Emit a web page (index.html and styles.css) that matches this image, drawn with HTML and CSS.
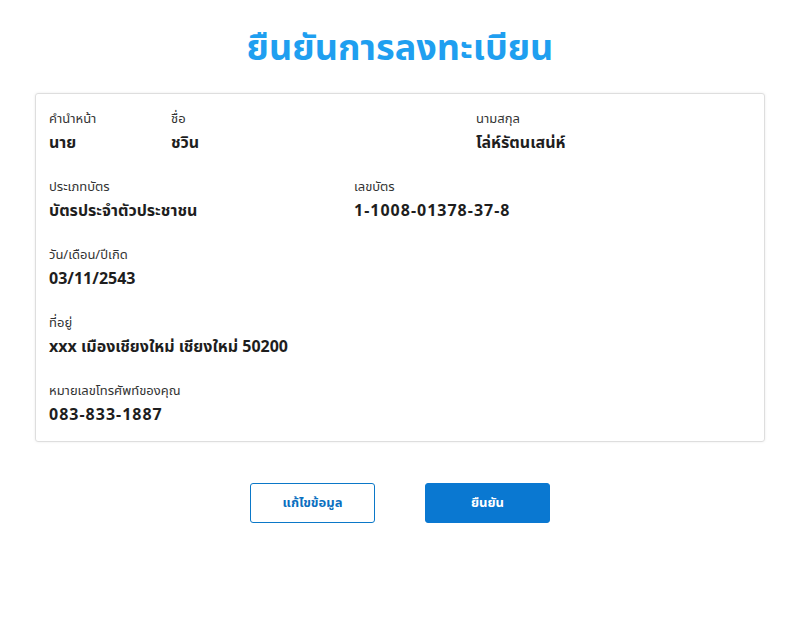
FILE: index.html
```html
<!DOCTYPE html>
<html lang="th">
<head>
<meta charset="utf-8">
<link rel="stylesheet" href="styles.css">
</head>
<body>
<main class="page">
  <h1 class="title">ยืนยันการลงทะเบียน</h1>
  <section class="card">
    <div class="row row-a">
      <div class="field"><div class="label">คำนำหน้า</div><div class="value">นาย</div></div>
      <div class="field"><div class="label">ชื่อ</div><div class="value">ชวิน</div></div>
      <div class="field"><div class="label">นามสกุล</div><div class="value">โล่ห์รัตนเสน่ห์</div></div>
    </div>
    <div class="row row-b">
      <div class="field"><div class="label">ประเภทบัตร</div><div class="value">บัตรประจำตัวประชาชน</div></div>
      <div class="field"><div class="label">เลขบัตร</div><div class="value num">1-1008-01378-37-8</div></div>
    </div>
    <div class="row">
      <div class="field"><div class="label">วัน/เดือน/ปีเกิด</div><div class="value">03/11/2543</div></div>
    </div>
    <div class="row">
      <div class="field"><div class="label">ที่อยู่</div><div class="value">xxx เมืองเชียงใหม่ เชียงใหม่ 50200</div></div>
    </div>
    <div class="row">
      <div class="field"><div class="label">หมายเลขโทรศัพท์ของคุณ</div><div class="value num">083-833-1887</div></div>
    </div>
  </section>
  <div class="actions">
    <button class="btn btn-outline" type="button">แก้ไขข้อมูล</button>
    <button class="btn btn-primary" type="button">ยืนยัน</button>
  </div>
</main>
</body>
</html>
```
FILE: styles.css
```css
* { box-sizing: border-box; }
html, body { margin: 0; padding: 0; background: #fff; }
body {
  font-family: "Noto Sans", "Noto Sans Thai", "Leelawadee UI", Tahoma, sans-serif;
  color: #222;
}
.page {
  width: 730px;
  margin: 0 auto;
  padding-top: 24px;
}
.title {
  margin: 0 0 23px;
  text-align: center;
  font-size: 36px;
  line-height: 46px;
  font-weight: 700;
  color: #1f9ff0;
}
.card {
  border: 1px solid #dedede;
  border-radius: 3px;
  box-shadow: 0 0 3px rgba(0,0,0,0.08);
  padding: 14px 13px 13px;
  display: flex;
  flex-direction: column;
  gap: 20px;
}
.row {
  display: grid;
  grid-template-columns: 1fr;
}
.row-a { grid-template-columns: 122px 305px 1fr; }
.row-b { grid-template-columns: 305px 1fr; }
.label {
  font-size: 13px;
  line-height: 20px;
  color: #333;
}
.value {
  font-size: 16px;
  line-height: 28px;
  font-weight: 700;
  color: #1e1e1e;
}
.value.num { letter-spacing: 1px; }
.actions {
  display: flex;
  justify-content: center;
  gap: 50px;
  margin-top: 41px;
}
.btn {
  width: 125px;
  height: 40px;
  border-radius: 3px;
  font-family: inherit;
  font-size: 13px;
  font-weight: 700;
  cursor: pointer;
}
.btn-outline {
  background: #fff;
  border: 1px solid #0b78c8;
  color: #0b6fbf;
}
.btn-primary {
  background: #0a78d1;
  border: 1px solid #0a78d1;
  color: #fff;
}
```
